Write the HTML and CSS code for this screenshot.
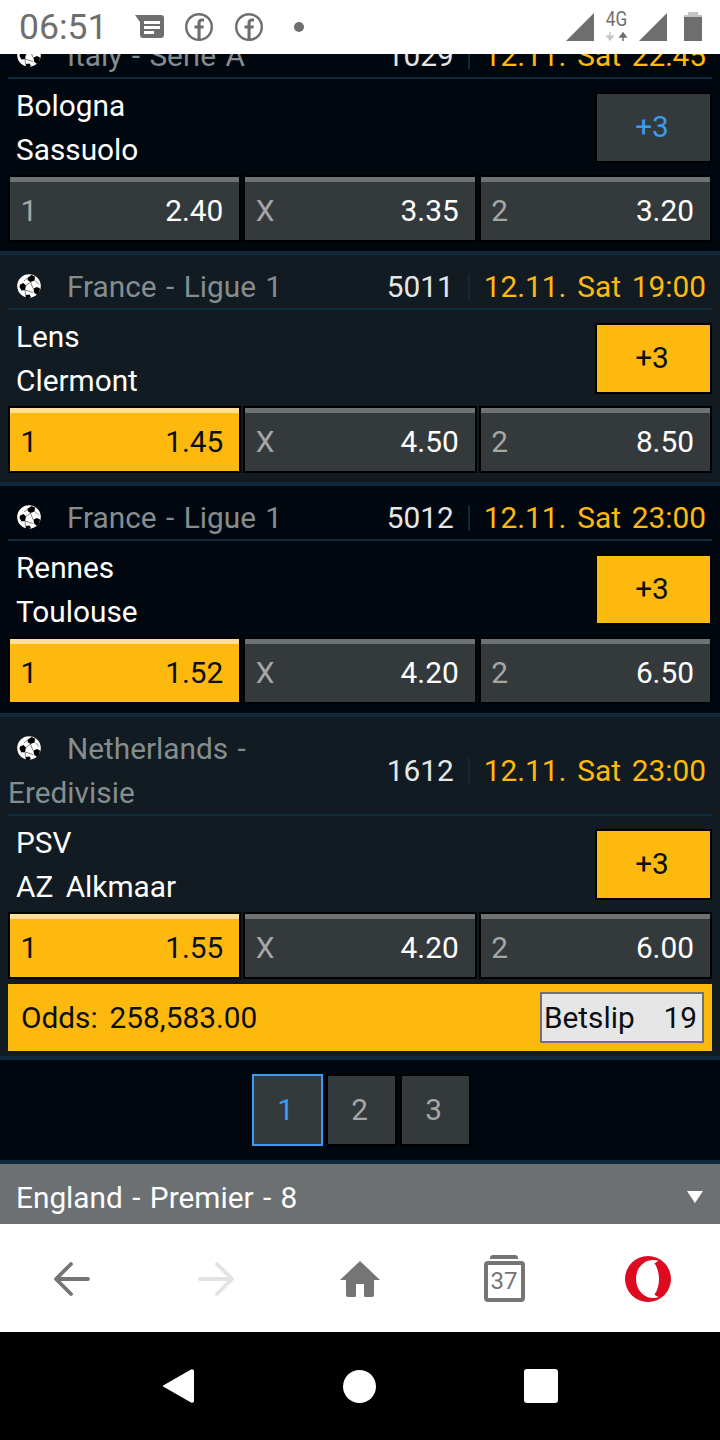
FILE: index.html
```html
<!DOCTYPE html>
<html>
<head>
<meta charset="utf-8">
<title>Betting</title>
<link rel="stylesheet" href="styles.css">
</head>
<body>

<svg class="defs">
  <symbol id="ball" viewBox="0 0 24 24">
    <circle cx="12" cy="12" r="11.800" fill="#fff"/>
    <path d="M11 3.500l3.500-2.500 3.500 1.500-.5 4-4 1.500-3-2zM3 10.500l3.500-1.500 2.500 2.500-1 4.500-3.500.5-2-3.500zM16.500 14.500l3.500-1.500 3 1.500-.5 3.500-2.500 3-3-2.500zM8.500 21l4-.5 1.500 2.500-2 1H9z" fill="#000"/>
    <path d="M11 3.500L7 7M13.500 8l2.500 6.500M9 11.500l4.500-3.500M8 16l.5 5M8 16l8 2.500M18 6.500l4 4" stroke="#000" stroke-width="0.5" fill="none"/>
  </symbol>
  <symbol id="fb" viewBox="0 0 28 28">
    <circle cx="14" cy="14" r="12.800" fill="none" stroke="#6e6e6e" stroke-width="2.400"/>
    <path d="M12.500 26.500V15.500H9.500v-3h3V10c0-3 1.700-4.500 4.300-4.500h2.200v3h-1.700c-1.200 0-1.700.6-1.700 1.700v2.300h3.300l-.5 3h-2.800v11z" fill="#6e6e6e"/>
  </symbol>
</svg>

<div class="statusbar">
  <span class="time">06:51</span>
  <svg width="29" height="23" viewBox="0 0 29 23"><path d="M0 0h26a3 3 0 0 1 3 3v17a3 3 0 0 1-3 3H8a3 3 0 0 1-3-3V7z" fill="#6e6e6e"/><path d="M9 6h16v3H9zM9 11h16v3H9zM9 16h10v3H9z" fill="#fff"/></svg>
  <svg class="st_fb" width="28" height="28"><use href="#fb"/></svg>
  <svg class="st_fb2" width="28" height="28"><use href="#fb"/></svg>
  <span class="st_dot"></span>
  <span class="st_right">
    <svg width="28" height="28" viewBox="0 0 28 28"><path d="M28 0v28H0z" fill="#6e6e6e"/></svg>
    <span class="net">
      <span class="net_text">4G</span>
      <svg width="21" height="9" viewBox="0 0 21 9"><path d="M4 0v5M1 4l3 4 3-4z" stroke="#c8c8c8" stroke-width="1.500" fill="#c8c8c8"/><path d="M17 9V4M14 5l3-4 3 4z" stroke="#6e6e6e" stroke-width="1.500" fill="#6e6e6e"/></svg>
    </span>
    <svg class="st_tri2" width="28" height="28" viewBox="0 0 28 28"><path d="M28 0v28H0z" fill="#6e6e6e"/></svg>
    <svg class="st_batt" width="18" height="29" viewBox="0 0 18 29"><path d="M4 0h10v3H4z" fill="#c4c4c4"/><path d="M0 3h18v6H0z" fill="#c4c4c4"/><path d="M0 5h18v24H0z" fill="#6e6e6e"/></svg>
  </span>
</div>

<div class="scroller">

  <div class="match first">
    <div class="match_head">
      <div class="league"><svg class="ball" width="24" height="24"><use href="#ball"/></svg>Italy - Serie A</div>
      <div class="code">1029</div>
      <div class="when">12.11. Sat 22:45</div>
    </div>
    <div class="match_body">
      <div class="teams"><div>Bologna</div><div>Sassuolo</div></div>
      <a class="more">+3</a>
    </div>
    <div class="odds">
      <div class="odd"><span class="lab">1</span><span>2.40</span></div>
      <div class="odd"><span class="lab">X</span><span>3.35</span></div>
      <div class="odd"><span class="lab">2</span><span>3.20</span></div>
    </div>
  </div>

  <div class="match alt">
    <div class="match_head">
      <div class="league"><svg class="ball" width="24" height="24"><use href="#ball"/></svg>France - Ligue 1</div>
      <div class="code">5011</div>
      <div class="when">12.11. Sat 19:00</div>
    </div>
    <div class="match_body">
      <div class="teams"><div>Lens</div><div>Clermont</div></div>
      <a class="more on">+3</a>
    </div>
    <div class="odds">
      <div class="odd on"><span class="lab">1</span><span>1.45</span></div>
      <div class="odd"><span class="lab">X</span><span>4.50</span></div>
      <div class="odd"><span class="lab">2</span><span>8.50</span></div>
    </div>
  </div>

  <div class="match">
    <div class="match_head">
      <div class="league"><svg class="ball" width="24" height="24"><use href="#ball"/></svg>France - Ligue 1</div>
      <div class="code">5012</div>
      <div class="when">12.11. Sat 23:00</div>
    </div>
    <div class="match_body">
      <div class="teams"><div>Rennes</div><div>Toulouse</div></div>
      <a class="more on">+3</a>
    </div>
    <div class="odds">
      <div class="odd on"><span class="lab">1</span><span>1.52</span></div>
      <div class="odd"><span class="lab">X</span><span>4.20</span></div>
      <div class="odd"><span class="lab">2</span><span>6.50</span></div>
    </div>
  </div>

  <div class="match alt last">
    <div class="match_head tall">
      <div class="league"><svg class="ball" width="24" height="24"><use href="#ball"/></svg>Netherlands - Eredivisie</div>
      <div class="code">1612</div>
      <div class="when">12.11. Sat 23:00</div>
    </div>
    <div class="match_body">
      <div class="teams"><div>PSV</div><div>AZ Alkmaar</div></div>
      <a class="more on">+3</a>
    </div>
    <div class="odds">
      <div class="odd on"><span class="lab">1</span><span>1.55</span></div>
      <div class="odd"><span class="lab">X</span><span>4.20</span></div>
      <div class="odd"><span class="lab">2</span><span>6.00</span></div>
    </div>
    <div class="slipbar">
      <span class="slip_odds">Odds: 258,583.00</span>
      <a class="betslip"><span>Betslip</span><span>19</span></a>
    </div>
  </div>

  <div class="pager">
    <a class="active">1</a>
    <a>2</a>
    <a>3</a>
  </div>

  <div class="section">
    <span>England - Premier - 8</span>
    <span class="arrow"></span>
  </div>
</div>

<div class="toolbar">
  <svg width="40" height="40" viewBox="0 0 40 40"><path d="M36 20H5M19 5L4 20l15 15" fill="none" stroke="#757575" stroke-width="3.800" stroke-linecap="round" stroke-linejoin="round"/></svg>
  <svg width="40" height="40" viewBox="0 0 40 40"><path d="M4 20h31M21 5l15 15-15 15" fill="none" stroke="#e3e3e3" stroke-width="3.800" stroke-linecap="round" stroke-linejoin="round"/></svg>
  <svg width="42" height="38" viewBox="0 0 42 38"><path d="M21 1L1 20h6v15a2 2 0 0 0 2 2h7a1 1 0 0 0 1-1V24h8v12a1 1 0 0 0 1 1h7a2 2 0 0 0 2-2V20h6z" fill="#757575"/></svg>
  <div class="tabs"><span class="tabs_top"></span><span class="tabs_num">37</span></div>
  <svg width="46" height="46" viewBox="0 0 46 46"><circle cx="23" cy="23" r="23" fill="#dd0a20"/><path d="M34 5C23 1 11 9 11 23s12 22 23 18c-1.500-.3-3-1-4.500-2.500 3-4 4.500-10 4.500-15.500s-1.500-11.500-4.500-15.500c1.500-1.500 3-2.200 4.500-2.500z" fill="#fff"/></svg>
</div>

<div class="navbar">
  <svg width="34" height="38" viewBox="0 0 34 38"><path d="M30 2.500L3 18a1 1 0 0 0 0 2l27 15.500a2 2 0 0 0 3-1.500V4a2 2 0 0 0-3-1.500z" fill="#fff"/></svg>
  <span class="nav_home"></span>
  <span class="nav_recent"></span>
</div>

</body>
</html>
```

FILE: styles.css
```css
* {
    box-sizing: border-box;
}
body {
    margin: 0;
    height: 1440px;
    display: flex;
    flex-direction: column;
    overflow: hidden;
    font-family: Roboto, "Liberation Sans", sans-serif;
    font-size: 29.8px;
    word-spacing: 3.5px;
    color: #fff;
    background-color: #000;
}
.defs {
    display: none;
}
.statusbar {
    height: 54px;
    flex: none;
    background-color: #fff;
    display: flex;
    align-items: center;
    padding-left: 19px;
    padding-bottom: 1px;
}
.time {
    font-size: 35.5px;
    color: #6e6e6e;
    width: 116px;
}
.st_fb {
    margin-left: 21px;
}
.st_fb2 {
    margin-left: 22px;
}
.st_dot {
    width: 10px;
    height: 10px;
    border-radius: 50%;
    background-color: #6e6e6e;
    margin-left: 31px;
}
.st_right {
    margin-left: auto;
    margin-right: 18px;
    display: flex;
    align-items: center;
    gap: 12px;
}
.st_tri2 {
    margin-right: 5px;
}
.net {
    display: flex;
    flex-direction: column;
    align-items: center;
    width: 21px;
    height: 29px;
    justify-content: space-between;
}
.net_text {
    font-size: 20px;
    line-height: 15px;
    color: #6e6e6e;
    transform: scaleX(0.86);
}
.scroller {
    flex: 1;
    overflow: hidden;
    background-color: #01070f;
}
.match {
    border-top: 4px solid #0e2a3c;
    padding: 0 8px 9px 8px;
    height: 231px;
    background-color: #01070f;
}
.match.alt {
    background-color: #111b21;
}
.match.first {
    margin-top: -34px;
}
.match.last {
    height: 343px;
    padding-bottom: 5px;
}
.match_head {
    height: 55px;
    padding-top: 10px;
    display: flex;
    align-items: center;
    border-bottom: 2px solid #0e2a3c;
}
.match_head.tall {
    height: 99px;
}
.league {
    flex: 1;
    color: #858d8f;
    line-height: 44px;
    word-spacing: 2px;
    padding-right: 60px;
}
.ball {
    margin: 0 26px 0 9px;
    vertical-align: -1px;
}
.code {
    color: #e6e6e6;
    padding-right: 14px;
    border-right: 2px solid #0e2a3c;
    line-height: 26px;
    margin-right: 14px;
}
.when {
    color: #feb90f;
    margin-right: 6px;
}
.match_body {
    height: 96px;
    display: flex;
    justify-content: space-between;
    align-items: center;
}
.teams {
    padding-left: 8px;
    padding-top: 1px;
    line-height: 44px;
    word-spacing: 5px;
}
.more {
    width: 117px;
    height: 71px;
    padding: 0 3px 2px 0;
    display: flex;
    align-items: center;
    justify-content: center;
    border: 2px solid #000;
    background-color: #343a3c;
    color: #3a9bf0;
}
.more.on {
    background-color: #feb90f;
    color: #0b0f14;
}
.odds {
    display: flex;
    gap: 2px;
    height: 67px;
}
.odd {
    flex: 1;
    display: flex;
    justify-content: space-between;
    align-items: center;
    padding: 3px 16px 0 10.5px;
    border: 2px solid #000;
    background: linear-gradient(#6d7273 5px, #343a3c 5px);
}
.odd.on {
    background: linear-gradient(#ffdf94 5px, #feb90f 5px);
    color: #0b0f14;
}
.lab {
    color: #a6a6a6;
}
.on .lab {
    color: #0b0f14;
}
.slipbar {
    margin-top: 5px;
    height: 67px;
    padding: 0 8px 0 13px;
    background-color: #feb90f;
    color: #0b0f14;
    display: flex;
    align-items: center;
    justify-content: space-between;
}
.slip_odds {
    word-spacing: 4.5px;
    padding-bottom: 1px;
}
.betslip {
    width: 164px;
    height: 51px;
    border: 2px solid #6d7273;
    background-color: #e6e6e6;
    display: flex;
    align-items: center;
    justify-content: space-between;
    padding: 0 5px 0 2px;
}
.pager {
    border-top: 4px solid #0e2a3c;
    height: 104px;
    display: flex;
    justify-content: center;
    align-items: center;
    gap: 3px;
    padding-left: 3px;
}
.pager a {
    width: 71px;
    height: 72px;
    padding: 0 4px 2px 0;
    display: flex;
    align-items: center;
    justify-content: center;
    border: 2px solid #000;
    background-color: #343a3c;
    color: #a6a6a6;
}
.pager a.active {
    border-color: #3a9bf0;
    color: #3a9bf0;
}
.section {
    height: 64px;
    padding: 6px 17px 0 16px;
    border-top: 4px solid #0e2a3c;
    background-color: #6c7072;
    word-spacing: 2px;
    display: flex;
    justify-content: space-between;
    align-items: center;
}
.arrow {
    width: 0;
    height: 0;
    border-left: 8px solid transparent;
    border-right: 8px solid transparent;
    border-top: 12px solid #fff;
}
.toolbar {
    height: 108px;
    flex: none;
    background-color: #fff;
    display: grid;
    grid-template-columns: repeat(5, 1fr);
    justify-items: center;
    align-items: center;
    padding-top: 2px;
}
.tabs {
    width: 41px;
    height: 48px;
    display: flex;
    flex-direction: column;
    align-items: center;
}
.tabs_top {
    width: 28px;
    height: 4px;
    border-radius: 3px 3px 0 0;
    background-color: #757575;
    margin-bottom: 2px;
}
.tabs_num {
    width: 41px;
    height: 41px;
    border: 4px solid #757575;
    border-radius: 4px;
    color: #757575;
    font-size: 24px;
    line-height: 33px;
    text-align: center;
}
.navbar {
    height: 108px;
    flex: none;
    background-color: #000;
    display: flex;
    align-items: center;
    justify-content: space-between;
    padding: 0 162px 0 161px;
}
.nav_home {
    width: 33px;
    height: 33px;
    border-radius: 50%;
    background-color: #fff;
}
.nav_recent {
    width: 34px;
    height: 34px;
    border-radius: 3px;
    background-color: #fff;
}
```
